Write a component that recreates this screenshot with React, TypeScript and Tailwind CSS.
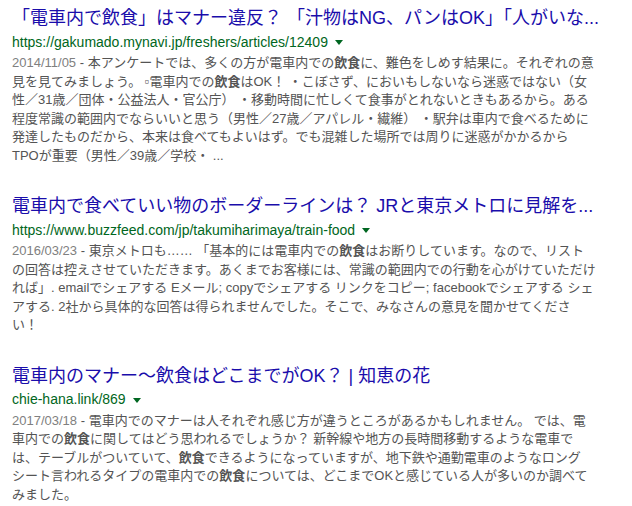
import React from 'react';

type Part = string | { b: string };

interface Result {
  title: string;
  url: string;
  date: string;
  lines: Part[][];
}

const RESULTS: Result[] = [
  {
    title: '「電車内で飲食」はマナー違反？ 「汁物はNG、パンはOK」「人がいな...',
    url: 'https://gakumado.mynavi.jp/freshers/articles/12409',
    date: '2014/11/05',
    lines: [
      [' - 本アンケートでは、多くの方が電車内での', { b: '飲食' }, 'に、難色をしめす結果に。それぞれの意'],
      ['見を見てみましょう。 ▫電車内での', { b: '飲食' }, 'はOK！ ・こぼさず、においもしないなら迷惑ではない（女'],
      ['性／31歳／団体・公益法人・官公庁） ・移動時間に忙しくて食事がとれないときもあるから。ある'],
      ['程度常識の範囲内でならいいと思う（男性／27歳／アパレル・繊維） ・駅弁は車内で食べるために'],
      ['発達したものだから、本来は食べてもよいはず。でも混雑した場所では周りに迷惑がかかるから'],
      ['TPOが重要（男性／39歳／学校・ ...'],
    ],
  },
  {
    title: '電車内で食べていい物のボーダーラインは？ JRと東京メトロに見解を...',
    url: 'https://www.buzzfeed.com/jp/takumiharimaya/train-food',
    date: '2016/03/23',
    lines: [
      [' - 東京メトロも…… 「基本的には電車内での', { b: '飲食' }, 'はお断りしています。なので、リスト'],
      ['の回答は控えさせていただきます。あくまでお客様には、常識の範囲内での行動を心がけていただけ'],
      ['れば」. emailでシェアする Eメール; copyでシェアする リンクをコピー; facebookでシェアする シェ'],
      ['アする. 2社から具体的な回答は得られませんでした。そこで、みなさんの意見を聞かせてくださ'],
      ['い！'],
    ],
  },
  {
    title: '電車内のマナー〜飲食はどこまでがOK？ | 知恵の花',
    url: 'chie-hana.link/869',
    date: '2017/03/18',
    lines: [
      [' - 電車内でのマナーは人それぞれ感じ方が違うところがあるかもしれません。 では、電'],
      ['車内での', { b: '飲食' }, 'に関してはどう思われるでしょうか？ 新幹線や地方の長時間移動するような電車で'],
      ['は、テーブルがついていて、', { b: '飲食' }, 'できるようになっていますが、地下鉄や通勤電車のようなロング'],
      ['シート言われるタイプの電車内での', { b: '飲食' }, 'については、どこまでOKと感じている人が多いのか調べて'],
      ['みました。'],
    ],
  },
];

const font = "font-['Liberation_Sans','Noto_Sans_CJK_JP',sans-serif]";

const SearchResult: React.FC<{ r: Result }> = ({ r }) => (
  <div className="mb-[29px]">
    <h3 className="text-[18px] leading-[24px] text-[#1a0dab] whitespace-nowrap">{r.title}</h3>
    <div className="flex items-center h-[24px] text-[14px] text-[#006621]">
      <span>{r.url}</span>
      <span className="ml-[7px] mt-[1px] w-0 h-0 border-l-[4px] border-r-[4px] border-t-[5px] border-l-transparent border-r-transparent border-t-[#006621]" />
    </div>
    <div className="text-[13px] leading-[18.5px] text-[#545454] whitespace-nowrap">
      {r.lines.map((line, i) => (
        <div key={i}>
          {i === 0 && <span className="text-[#808080]">{r.date}</span>}
          {line.map((p, j) =>
            typeof p === 'string' ? <span key={j}>{p}</span> : <b key={j} className="font-bold text-[#545454]">{p.b}</b>
          )}
        </div>
      ))}
    </div>
  </div>
);

export default function App() {
  return (
    <div className={`w-[632px] h-[506px] overflow-hidden bg-white pl-[12px] pt-[6px] ${font}`}>
      {RESULTS.map(r => (
        <SearchResult key={r.url} r={r} />
      ))}
    </div>
  );
}
